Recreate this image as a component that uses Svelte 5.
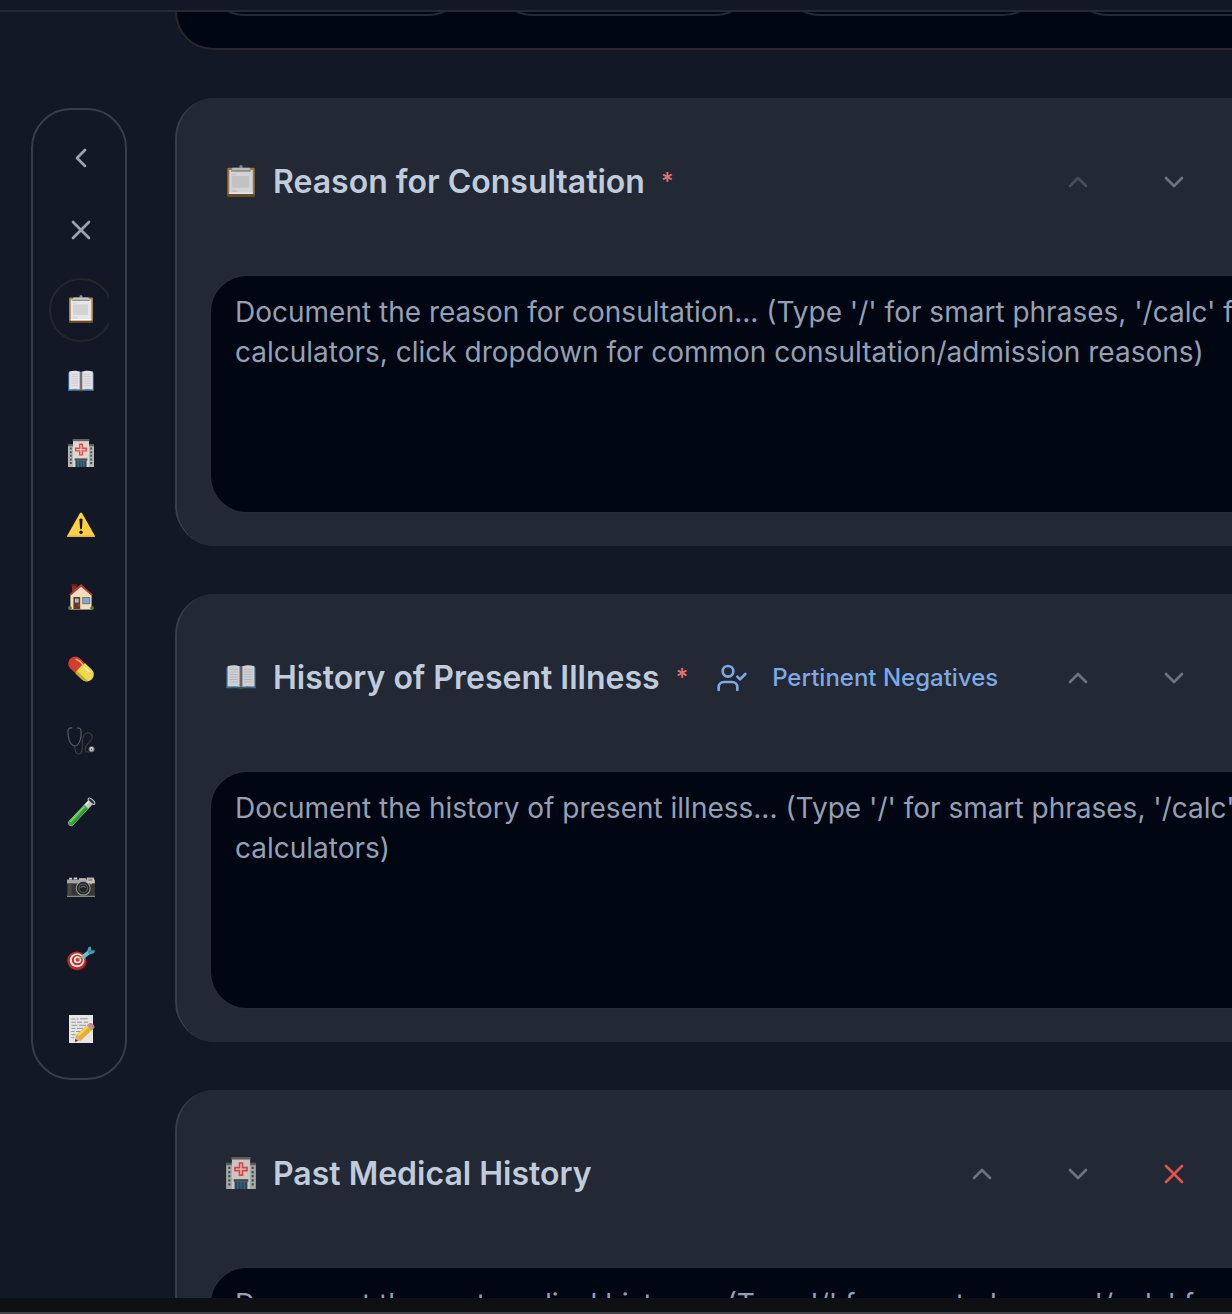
<script>
  const navItems = [
    'clipboard', 'book', 'hospital', 'warning', 'house', 'pill',
    'stethoscope', 'tube', 'camera', 'target', 'memo'
  ];

  const sections = [
    {
      icon: 'clipboard',
      title: 'Reason for Consultation',
      required: true,
      upDisabled: true,
      lines: [
        "Document the reason for consultation... (Type '/' for smart phrases, '/calc' for",
        'calculators, click dropdown for common consultation/admission reasons)'
      ]
    },
    {
      icon: 'book',
      title: 'History of Present Illness',
      required: true,
      negatives: true,
      lines: [
        "Document the history of present illness... (Type '/' for smart phrases, '/calc' for",
        'calculators)'
      ]
    },
    {
      icon: 'hospital',
      title: 'Past Medical History',
      removable: true,
      lines: [
        "Document the past medical history... (Type '/' for smart phrases, '/calc' for",
        'calculators)'
      ]
    }
  ];
</script>

{#snippet line(name)}
  <svg class="line" viewBox="0 0 24 24" aria-hidden="true">
    {#if name === 'left'}
      <path d="m15 18-6-6 6-6" />
    {:else if name === 'up'}
      <path d="m18 15-6-6-6 6" />
    {:else if name === 'down'}
      <path d="m6 9 6 6 6-6" />
    {:else if name === 'x'}
      <path d="M18 6 6 18M6 6l12 12" />
    {:else if name === 'user-check'}
      <path d="M16 21v-2a4 4 0 0 0-4-4H6a4 4 0 0 0-4 4v2" />
      <circle cx="9" cy="7" r="4" />
      <path d="m16 11 2 2 4-4" />
    {/if}
  </svg>
{/snippet}

{#snippet emoji(name)}
  <svg class="emoji" viewBox="0 0 28 28" aria-hidden="true">
    {#if name === 'clipboard'}
      <rect x="2" y="2.4" width="24" height="25.2" rx="1" fill="#a8803f" />
      <rect x="2" y="25.4" width="24" height="2.2" rx="0.8" fill="#6d4d1f" />
      <rect x="3.7" y="4.4" width="20.6" height="21" fill="#e6e6e7" />
      <rect x="6" y="9.6" width="15" height="10.4" rx="1" fill="#d3d3d4" />
      <path d="M6 8.3h4M6 22h3.6M6 23.2h5" stroke="#c4c4c6" stroke-width="0.5" />
      <rect x="3.7" y="24" width="20.6" height="1.4" fill="#fafafa" />
      <circle cx="14" cy="1.6" r="1.5" fill="#8b8e97" />
      <path d="M5.4 5.2 6.6 2.5h14.8l1.2 2.7z" fill="#c6c9d1" />
      <rect x="5.4" y="4.8" width="17.2" height="0.9" fill="#767065" />
    {:else if name === 'book'}
      <path d="M1 5.6h26V24H1z" fill="#2f648c" />
      <path d="M2.2 4.6C6 3.2 11 3.4 14 5.2c3-1.8 8-2 11.8-.6v17.8c-4-.7-9-.6-11.8.6-2.8-1.2-7.8-1.3-11.8-.6z" fill="#e3e2e6" />
      <path d="M12.6 4.6 14 5.4l1.4-.8v17.7l-1.4.7-1.4-.7z" fill="#8f8e95" />
      <path d="M14 5.2V23" stroke="#45454d" stroke-width="0.8" />
      <path d="M4.2 7.4h7M4.2 9.6h7M4.2 11.8h7M4.2 14h7M4.2 16.2h7M4.2 18.4h7M16.8 7.4h7M16.8 9.6h7M16.8 11.8h7M16.8 14h7M16.8 16.2h7M16.8 18.4h7" stroke="#c6c5cb" stroke-width="0.8" />
      <path d="M2 22.8c4-.8 9-.8 12 .3 3-1.1 8-1.1 12-.3" fill="none" stroke="#91a7b7" stroke-width="0.8" />
      <path d="M12.2 22.7h3.6v1.6h-3.6z" fill="#545222" />
    {:else if name === 'hospital'}
      <path d="M1 5.4h5.4V28H1zM21.6 5.4H27V28h-5.4z" fill="#b7b5ad" />
      <path d="M1 5h5.4v2.2H1zM21.6 5H27v2.2h-5.4z" fill="#665f59" />
      <path d="M3.8 8.6v18M24.2 8.6v18" stroke="#31566c" stroke-width="1.8" stroke-dasharray="2 1.6" />
      <rect x="6" y="1" width="16" height="27" fill="#dad8d1" />
      <rect x="5.6" y="0" width="16.8" height="2.2" fill="#69625c" />
      <path d="M12 4.6h4v4h4v4h-4v4h-4v-4H8v-4h4z" fill="#ed4747" />
      <path d="M13.4 6h1.2v4h4v1.200h-4v4h-1.200v-4h-4V10h4z" fill="#f2d0cd" />
      <rect x="7.600" y="19.400" width="12.800" height="2.200" fill="#4d4a48" />
      <rect x="8.400" y="21.400" width="11.200" height="6.600" fill="#284c66" />
      <path d="M11.200 21.400V28M14 21.400V28M16.800 21.400V28" stroke="#6f8fa5" stroke-width="0.500" />
    {:else if name === 'warning'}
      <path d="M13 2.100c.5-.9 1.500-.9 2 0l12.700 22.300c.5.900.1 1.600-.9 1.600H1.200c-1 0-1.400-.7-.9-1.600z" fill="#fbd045" />
      <path d="M.4 24.600h27.200c.3.800-.1 1.400-.9 1.400H1.300c-.8 0-1.200-.6-.9-1.400z" fill="#e3b23a" />
      <path d="M12.400 8.200q1.600-1.400 3.200 0l-.7 9.600q-.9.800-1.800 0z" fill="#15120a" />
      <circle cx="14" cy="21.200" r="1.700" fill="#15120a" />
    {:else if name === 'house'}
      <path d="M5 1.600h4.600v7H5z" fill="#8e2f27" />
      <path d="M4.500 1h5.600v1.700H4.500z" fill="#5f1d1b" />
      <path d="M3.400 12 14 2l10.600 10v14.600H3.400z" fill="#efdfba" />
      <path d="M14 1 2.300 11.500l1.200 1.300L14 3.800l10.500 9 1.200-1.300z" fill="#b83a2d" />
      <rect x="6.400" y="14" width="6.800" height="12.600" fill="#6d3423" />
      <rect x="7.900" y="15.600" width="3.800" height="4" fill="#8fc4e8" />
      <circle cx="11.900" cy="22" r="0.600" fill="#d3a252" />
      <rect x="15.200" y="14" width="8" height="7.200" fill="#8b7556" />
      <rect x="16.200" y="15" width="6" height="5.200" fill="#73ade0" />
      <circle cx="2.900" cy="25" r="1.900" fill="#4c7b2f" />
      <circle cx="25.100" cy="25" r="1.900" fill="#4c7b2f" />
      <rect x="3.400" y="26" width="21.200" height="0.900" fill="#8e877a" />
    {:else if name === 'pill'}
      <g transform="translate(14 14) rotate(43) scale(1.08 1.12) translate(-14 -14)">
        <path d="M14 7.800H6.400a6.200 6.200 0 0 0 0 12.400H14z" fill="#d63c2a" />
        <path d="M13.200 7.800h8.400a6.200 6.200 0 0 1 0 12.400h-8.400q-2-6.200 0-12.400z" fill="#ecd852" />
        <path d="M13.200 20.200q-1-1.200-1.200-2.500h14.300a6.200 6.200 0 0 1-4.700 2.500z" fill="#c9ab32" />
        <path d="M4.600 10.600q3.800-1.400 7.400-.6" stroke="#f5a79b" stroke-width="1.400" stroke-linecap="round" fill="none" />
        <path d="M15.800 10.700h5" stroke="#fff3a0" stroke-width="1.600" stroke-linecap="round" />
      </g>
    {:else if name === 'stethoscope'}
      <g fill="none" stroke-linecap="round">
        <path d="M5 .9C2 .5.8 1.800.9 4.500.9 10 2.600 18.500 7.800 19c4.800-.4 6.600-8.500 6.300-14.500C14 2 12.800.7 10.300 1" stroke="#5e6067" stroke-width="1.100" />
        <path d="M7.600 19c.1 5 1.800 8.100 4.300 8 6.200-.2 1.400-13.500 5-18.800 2.600-3.900 8.500-2.800 8.300 2.200-.2 4.300-4.600 5.500-6.400 9.100-1.500 3.300.2 6.300 3 5.600" stroke="#393b41" stroke-width="1.200" />
      </g>
      <circle cx="24.600" cy="22.200" r="3" fill="#74777b" />
      <circle cx="24.600" cy="22" r="1.900" fill="#d8d9da" />
      <circle cx="24.600" cy="22.400" r="0.800" fill="#55585c" />
    {:else if name === 'tube'}
      <g transform="rotate(43 14 14)">
        <path d="M10.600-1h6v29a3 3 0 0 1-6 0z" fill="#b9cbbb" />
        <path d="M11.100 6h5v22.200a2.500 2.500 0 0 1-5 0z" fill="#35a832" />
        <path d="M12.200 7v21" stroke="#83df68" stroke-width="1.200" />
        <path d="M15.500 7v20" stroke="#1c7224" stroke-width="0.900" />
        <path d="M11.800 0v5" stroke="#f4f6f5" stroke-width="1.300" />
        <ellipse cx="13.600" cy="-1.800" rx="4.200" ry="1.800" fill="#1d3830" stroke="#c2c8cb" stroke-width="1" />
      </g>
    {:else if name === 'camera'}
      <path d="M2 6.800h3v2H2zM6.600 6.600h3.600v2H6.600zM12 7.200h7v2h-7z" fill="#c9c9c5" />
      <path d="M0 8.600h28v17.200H0z" fill="#a5a49f" />
      <path d="M0 12.400h28v12.400H0z" fill="#363635" />
      <path d="M1 12.600h3.500v12H1z" fill="#494947" />
      <rect x="19.800" y="6.600" width="7.200" height="5.400" fill="#c6c4bb" />
      <rect x="21.400" y="7.600" width="4" height="2.400" fill="#908d83" />
      <circle cx="16.200" cy="17.200" r="7.400" fill="#a6a7a5" />
      <circle cx="16.200" cy="17.200" r="6.400" fill="#232525" />
      <circle cx="16.200" cy="17.200" r="4.800" fill="#5d6263" />
      <circle cx="16.200" cy="17.200" r="3.700" fill="#202325" />
      <path d="M13.600 16.400q2.600-2.200 5.200 0" stroke="#868d90" stroke-width="0.900" fill="none" />
      <rect x="22.600" y="12" width="2.400" height="1.300" fill="#d9a43d" />
    {:else if name === 'target'}
      <ellipse cx="10.400" cy="19" rx="9.400" ry="8.600" fill="#7d1b1b" />
      <ellipse cx="9.700" cy="17.600" rx="9.500" ry="9.200" fill="#c52a27" />
      <ellipse cx="10" cy="17.200" rx="7.200" ry="7" fill="#f1edec" />
      <ellipse cx="10.300" cy="17" rx="5.500" ry="5.300" fill="#c52a27" />
      <ellipse cx="10.500" cy="16.800" rx="3.700" ry="3.500" fill="#f1edec" />
      <ellipse cx="10.700" cy="16.700" rx="2" ry="1.900" fill="#c52a27" />
      <path d="M11 16.500 17 12.500" stroke="#d29c48" stroke-width="1.600" />
      <path d="m16.500 13.600 5.200-4.200" stroke="#65bfd2" stroke-width="4" stroke-linecap="round" />
      <path d="m20 8.600 1.400-4.400L24 3.600l.2 3.600 3.800.4-.8 2.400-4.700 1.600z" fill="#4b9fb2" />
      <path d="m21.500 9.500 4.300-3" stroke="#24586a" stroke-width="0.600" />
    {:else if name === 'memo'}
      <rect x="2" y="0" width="24" height="28" fill="#e5e5e3" />
      <path d="M4.400 4h4M9.600 4h2M13 3.800h7.600M4.400 7.200h4.400M10 7.200h5M16.600 7.200h4.400M4.400 10.300h6M12 10.300h7M4.400 13.400h4M10 13.400h6M4.400 16.500h3M9 16.500h4M4.400 19.600h4M4.400 22.700h3" stroke="#8d8e90" stroke-width="0.900" />
      <path d="m9 20.600 12-11.400 4.800 5-11.700 11-5.900 1.400z" fill="#e6ad2e" />
      <path d="m10.600 19.600 10.700-10.200 1.600 1.600-11 10.300z" fill="#f9d65b" />
      <path d="m9 20.600 5.100 4.600-5.900 1.500z" fill="#dbb68a" />
      <path d="m8.600 23.800 2.300 2.100-2.900.8z" fill="#2f2b29" />
      <path d="m19.900 10.400 1.800-1.700 4.900 4.900-1.800 1.700z" fill="#92a6ae" />
      <path d="m21.600 8.900 1.100-.8q1.500-.7 3.300 1t1.500 3.400l-1.100 1.200z" fill="#e5757d" />
    {/if}
  </svg>
{/snippet}

<div class="app">
  <header class="topbar"></header>

  <div class="workspace">
    <nav class="rail">
      <button class="rail-btn" aria-label="Collapse">{@render line('left')}</button>
      <button class="rail-btn" aria-label="Close">{@render line('x')}</button>
      <div class="rail-list">
        {#each navItems as item, i}
          <button class="rail-btn nav-item" class:active={i === 0} aria-label={item}>
            {@render emoji(item)}
          </button>
        {/each}
      </div>
    </nav>

    <main class="content">
      <section class="summary">
        {#each [0, 1, 2, 3] as n (n)}
          <div class="field"></div>
        {/each}
      </section>

      {#each sections as s}
        <section class="card">
          <div class="card-head">
            {@render emoji(s.icon)}
            <h3>{s.title}</h3>
            {#if s.required}<span class="star">*</span>{/if}
            {#if s.negatives}
              <button class="negatives">
                {@render line('user-check')}
                <span>Pertinent Negatives</span>
              </button>
            {/if}
            <div class="actions">
              <button class:dim={s.upDisabled} aria-label="Move up">{@render line('up')}</button>
              <button aria-label="Move down">{@render line('down')}</button>
              {#if s.removable}
                <button class="remove" aria-label="Remove">{@render line('x')}</button>
              {/if}
            </div>
          </div>
          <div class="note">
            {#each s.lines as l}<p>{l}</p>{/each}
          </div>
        </section>
      {/each}
    </main>
  </div>

  <footer class="bottombar"></footer>
</div>

<style>
  :global(body) {
    background: #121825;
    overflow: hidden;
  }

  .app {
    display: flex;
    flex-direction: column;
    width: 1232px;
    height: 1314px;
    box-sizing: border-box;
    overflow: hidden;
    background: #121825;
    font-family: Inter, 'Liberation Sans', sans-serif;
  }

  button {
    display: flex;
    align-items: center;
    justify-content: center;
    flex: none;
    margin: 0;
    padding: 0;
    border: 0;
    background: none;
    font: inherit;
    color: inherit;
  }

  .topbar {
    flex: none;
    height: 10px;
    border-bottom: 2px solid #232935;
  }

  .bottombar {
    flex: none;
    height: 14px;
    background: #0f1014;
    border-bottom: 2px solid #434247;
  }

  .workspace {
    flex: 1;
    min-height: 0;
    display: flex;
    align-items: flex-start;
    gap: 48px;
    padding-left: 31px;
    overflow: hidden;
  }

  .rail {
    flex: none;
    display: flex;
    flex-direction: column;
    gap: 8px;
    box-sizing: border-box;
    width: 96px;
    height: 972px;
    margin-top: 96px;
    padding: 16px;
    border: 2px solid #373d49;
    border-radius: 40px;
    color: #9ca3af;
  }

  .rail-btn {
    box-sizing: border-box;
    width: 64px;
    height: 64px;
    border-radius: 50%;
  }

  .rail-list {
    display: flex;
    flex-direction: column;
    gap: 8px;
    margin-top: 8px;
    overflow: hidden;
  }

  .nav-item {
    padding-bottom: 2px;
    border: 2px solid transparent;
  }

  .nav-item.active {
    border-color: #24262a;
  }

  .line {
    display: block;
    flex: none;
    width: 32px;
    height: 32px;
    fill: none;
    stroke: currentColor;
    stroke-width: 2;
    stroke-linecap: round;
    stroke-linejoin: round;
  }

  .emoji {
    display: block;
    flex: none;
    width: 28px;
    height: 28px;
    overflow: visible;
  }

  .content {
    flex: none;
    width: 1180px;
    display: flex;
    flex-direction: column;
    gap: 48px;
  }

  .summary {
    display: flex;
    gap: 25px;
    box-sizing: border-box;
    height: 38px;
    padding-left: 28px;
    background: #010613;
    border: 2px solid #26282b;
    border-top: 0;
    border-radius: 0 0 40px 40px;
    overflow: hidden;
  }

  .field {
    flex: none;
    align-self: flex-start;
    box-sizing: border-box;
    width: 262.5px;
    height: 80px;
    margin-top: -76px;
    border: 2px solid #202a35;
    border-radius: 40px;
  }

  .card {
    box-sizing: border-box;
    height: 448px;
    padding: 52px 0 32px 32px;
    background: #222834;
    border-left: 2px solid #383e49;
    border-radius: 40px;
  }

  .card-head {
    display: flex;
    align-items: center;
    height: 64px;
    padding: 0 149px 0 16px;
    margin-bottom: 60px;
  }

  .card-head > .emoji {
    width: 32px;
    height: 32px;
    margin: 0 16px 2px 0;
    opacity: 0.9;
  }

  h3 {
    margin: 0;
    font-size: 32px;
    line-height: 40px;
    font-weight: 600;
    color: #c0cbdc;
    white-space: nowrap;
  }

  .star {
    margin-left: 16px;
    font-size: 24px;
    line-height: 32px;
    font-weight: 500;
    color: #e57373;
  }

  .negatives {
    gap: 24px;
    margin-left: 28px;
    font-size: 24px;
    font-weight: 500;
    color: #7fa9e5;
    white-space: nowrap;
  }

  .negatives span {
    padding-bottom: 2px;
  }

  .actions {
    display: flex;
    gap: 32px;
    margin-left: auto;
    color: #6b7280;
  }

  .actions button {
    width: 64px;
    height: 64px;
  }

  .actions .dim {
    color: #474e5a;
  }

  .actions .remove {
    color: #e0524e;
  }

  .note {
    box-sizing: border-box;
    height: 240px;
    padding: 16px 24px;
    background: #010613;
    border: 2px solid #222d38;
    border-radius: 38px;
    overflow: hidden;
  }

  .note p {
    margin: 0;
    font-size: 28px;
    line-height: 40px;
    color: #94a0b3;
    white-space: nowrap;
  }
</style>
